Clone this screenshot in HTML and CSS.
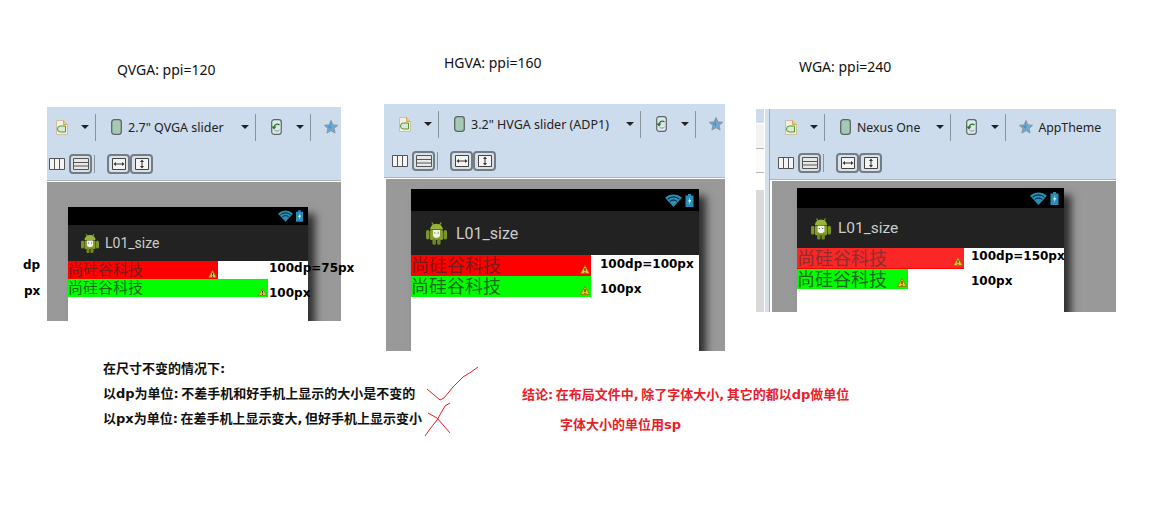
FILE: index.html
```html
<!DOCTYPE html>
<html lang="zh-CN">
  <head>
    <meta charset="UTF-8" />
    <title>dp px</title>
    <link rel="stylesheet" href="styles.css">
  </head>
  <body>
    <svg class="defs" width="0" height="0">
      <symbol id="doc" viewBox="0 0 12 15">
        <path d="M.5.5h7l4 4v10H.5z" fill="#f4efe0" stroke="#cdbf9f"/>
        <path d="M7.5.5v4h4" fill="#f6c66a" stroke="#d9a850"/>
        <path d="M9.500 6H4.500a3 3 0 0 0 0 6h5z" fill="#dbe8d8" stroke="#4c9a2a"/>
      </symbol>
      <symbol id="device" viewBox="0 0 11 16">
        <rect x=".7" y=".7" width="9.6" height="14.6" rx="2.5" fill="#a4c9b4" stroke="#5f6468" stroke-width="1.3"/>
      </symbol>
      <symbol id="rotate" viewBox="0 0 11 16">
        <rect x=".7" y=".7" width="9.6" height="14.6" rx="2.5" fill="#dfe7ee" stroke="#5f6468" stroke-width="1.2"/>
        <path d="M8.500 6A3.400 3.400 0 0 0 3 8" fill="none" stroke="#1b7a23" stroke-width="1.2"/>
        <path d="M.5 7.500h5l-2.500 3z" fill="#1b7a23"/>
        <path d="M3.500 11a3.400 3.400 0 0 0 5 0" fill="none" stroke="#7f9a8a"/>
      </symbol>
      <symbol id="star" viewBox="0 0 14 14">
        <path d="M7 .5l1.900 4.400 4.700.4-3.600 3.100 1.100 4.600L7 10.600 2.900 13l1.100-4.600L.4 5.300l4.700-.4z" fill="#6fa9cf" stroke="#8a949c"/>
        <path d="M7 3L5.800 6 3.500 6.500 7 9z" fill="#2d9ce0"/>
      </symbol>
      <symbol id="cols" viewBox="0 0 16 12">
        <path d="M.5.500h15v11H.5zM5.500.500v11M10.500.500v11" fill="#f4f4f4" stroke="#555"/>
      </symbol>
      <symbol id="rows" viewBox="0 0 16 12">
        <path d="M.5.500h15v11H.5zM.5 4.500h15M.5 8h15" fill="#e8e8e8" stroke="#555"/>
      </symbol>
      <symbol id="hfit" viewBox="0 0 14 12">
        <path d="M.5.500h13v11H.5z" fill="#f4f4f4" stroke="#444"/>
        <path d="M3 6h8" stroke="#333"/>
        <path d="M1.500 6l2.500-2v4zM12.500 6L10 4v4z" fill="#333"/>
      </symbol>
      <symbol id="vfit" viewBox="0 0 14 12">
        <path d="M.5.500h13v11H.5z" fill="#f4f4f4" stroke="#444"/>
        <path d="M7 3v6" stroke="#333"/>
        <path d="M7 1.500L5 4h4zM7 10.500L5 8h4z" fill="#333"/>
      </symbol>
      <symbol id="android" viewBox="0 0 18 20">
        <path d="M5 1l1.500 2.500M13 1l-1.500 2.500" stroke="#8aa62e"/>
        <path d="M3.500 7a5.500 5 0 0 1 11 0z" fill="#96b436"/>
        <rect x="3.500" y="7.500" width="11" height="8.500" rx="1" fill="#86a02c"/>
        <rect x="0" y="7.500" width="3" height="8" rx="1.500" fill="#7b9528"/>
        <rect x="15" y="7.500" width="3" height="8" rx="1.500" fill="#7b9528"/>
        <rect x="5.500" y="15" width="3" height="5" rx="1" fill="#6f8823"/>
        <rect x="9.500" y="15" width="3" height="5" rx="1" fill="#6f8823"/>
        <path d="M6 7.500h6v5l-1.500 1.500h-3L6 12.500z" fill="#f2f2ea"/>
        <path d="M7 9.500h1v1H7zM10 9.500h1v1h-1z" fill="#555"/>
      </symbol>
      <symbol id="wifi" viewBox="0 0 16 12">
        <path d="M0 3.500a11.500 11.500 0 0 1 16 0L8 12z" fill="#2a8db5"/>
        <path d="M2.500 4.800a8 8 0 0 1 11 0M4.500 7a5 5 0 0 1 7 0" fill="none" stroke="#000" stroke-width=".8"/>
      </symbol>
      <symbol id="battery" viewBox="0 0 8 13">
        <path d="M2.500 0h3v1.500H8V13H0V1.500h2.500z" fill="#2a8db5"/>
        <path d="M4.800 3L2.500 7.500h1.500L3.200 11l2.600-5H4.200z" fill="#d8f0fa"/>
      </symbol>
      <symbol id="warn" viewBox="0 0 10 9">
        <path d="M5 .5l4.500 8H.5z" fill="#f3c21d" stroke="#8d6a10" stroke-width=".7"/>
        <path d="M5 3v3M5 6.800v1" stroke="#222"/>
      </symbol>
    </svg>

    <div class="canvas">
      <div class="caption caption-qvga">QVGA: ppi=120</div>
      <div class="caption caption-hvga">HGVA: ppi=160</div>
      <div class="caption caption-wga">WGA: ppi=240</div>

      <section class="shot shot-qvga">
        <div class="toolbar">
          <div class="tool-row">
            <svg class="ic-doc"><use href="#doc"/></svg>
            <span class="caret"></span>
            <span class="sep"></span>
            <svg class="ic-device"><use href="#device"/></svg>
            <span class="tool-text device-name">2.7" QVGA slider</span>
            <span class="caret"></span>
            <span class="sep"></span>
            <svg class="ic-rotate"><use href="#rotate"/></svg>
            <span class="caret"></span>
            <span class="sep"></span>
            <svg class="ic-star"><use href="#star"/></svg>
          </div>
          <div class="tool-row row-two">
            <svg class="ic-cols"><use href="#cols"/></svg>
            <span class="tbtn"><svg><use href="#rows"/></svg></span>
            <span class="sep sep-short"></span>
            <span class="tbtn tbtn-first"><svg><use href="#hfit"/></svg></span>
            <span class="tbtn"><svg><use href="#vfit"/></svg></span>
          </div>
        </div>
        <div class="stage">
          <div class="phone">
            <div class="status"><svg class="ic-wifi"><use href="#wifi"/></svg><svg class="ic-battery"><use href="#battery"/></svg></div>
            <div class="appbar"><svg class="ic-android"><use href="#android"/></svg><span>L01_size</span></div>
            <div class="bar bar-red"><span>尚硅谷科技</span><svg class="ic-warn"><use href="#warn"/></svg></div>
            <div class="bar bar-green"><span>尚硅谷科技</span><svg class="ic-warn"><use href="#warn"/></svg></div>
          </div>
        </div>
      </section>

      <section class="shot shot-hvga">
        <div class="toolbar">
          <div class="tool-row">
            <svg class="ic-doc"><use href="#doc"/></svg>
            <span class="caret"></span>
            <span class="sep"></span>
            <svg class="ic-device"><use href="#device"/></svg>
            <span class="tool-text device-name">3.2" HVGA slider (ADP1)</span>
            <span class="caret"></span>
            <span class="sep"></span>
            <svg class="ic-rotate"><use href="#rotate"/></svg>
            <span class="caret"></span>
            <span class="sep"></span>
            <svg class="ic-star"><use href="#star"/></svg>
          </div>
          <div class="tool-row row-two">
            <svg class="ic-cols"><use href="#cols"/></svg>
            <span class="tbtn"><svg><use href="#rows"/></svg></span>
            <span class="sep sep-short"></span>
            <span class="tbtn tbtn-first"><svg><use href="#hfit"/></svg></span>
            <span class="tbtn"><svg><use href="#vfit"/></svg></span>
          </div>
        </div>
        <div class="stage">
          <div class="phone">
            <div class="status"><svg class="ic-wifi"><use href="#wifi"/></svg><svg class="ic-battery"><use href="#battery"/></svg></div>
            <div class="appbar"><svg class="ic-android"><use href="#android"/></svg><span>L01_size</span></div>
            <div class="bar bar-red"><span>尚硅谷科技</span><svg class="ic-warn"><use href="#warn"/></svg></div>
            <div class="bar bar-green"><span>尚硅谷科技</span><svg class="ic-warn"><use href="#warn"/></svg></div>
          </div>
        </div>
      </section>

      <section class="shot shot-wga">
        <div class="side">
          <div class="side-pane">
            <div class="side-top"></div>
            <div class="side-gap"></div>
            <div class="side-box"></div>
            <div class="side-gap side-gap-low"></div>
            <div class="side-scroll"></div>
          </div>
        </div>
        <div class="shot-main">
          <div class="toolbar">
            <div class="tool-row">
              <svg class="ic-doc"><use href="#doc"/></svg>
              <span class="caret"></span>
              <span class="sep"></span>
              <svg class="ic-device"><use href="#device"/></svg>
              <span class="tool-text device-name">Nexus One</span>
              <span class="caret"></span>
              <span class="sep"></span>
              <svg class="ic-rotate"><use href="#rotate"/></svg>
              <span class="caret"></span>
              <span class="sep"></span>
              <svg class="ic-star"><use href="#star"/></svg>
              <span class="tool-text theme-name">AppTheme</span>
            </div>
            <div class="tool-row row-two">
              <svg class="ic-cols"><use href="#cols"/></svg>
              <span class="tbtn"><svg><use href="#rows"/></svg></span>
              <span class="sep sep-short"></span>
              <span class="tbtn tbtn-first"><svg><use href="#hfit"/></svg></span>
              <span class="tbtn"><svg><use href="#vfit"/></svg></span>
            </div>
          </div>
          <div class="stage">
            <div class="phone">
              <div class="status"><svg class="ic-wifi"><use href="#wifi"/></svg><svg class="ic-battery"><use href="#battery"/></svg></div>
              <div class="appbar"><svg class="ic-android"><use href="#android"/></svg><span>L01_size</span></div>
              <div class="bar bar-red"><span>尚硅谷科技</span><svg class="ic-warn"><use href="#warn"/></svg></div>
              <div class="bar bar-green"><span>尚硅谷科技</span><svg class="ic-warn"><use href="#warn"/></svg></div>
            </div>
          </div>
        </div>
      </section>

      <div class="tag tag-dp">dp</div>
      <div class="tag tag-px">px</div>
      <div class="tag tag-a1">100dp=75px</div>
      <div class="tag tag-a2">100px</div>
      <div class="tag tag-b1">100dp=100px</div>
      <div class="tag tag-b2">100px</div>
      <div class="tag tag-c1">100dp=150px</div>
      <div class="tag tag-c2">100px</div>

      <div class="notes">
        <p>在尺寸不变的情况下:</p>
        <p>以dp为单位: 不差手机和好手机上显示的大小是不变的</p>
        <p>以px为单位: 在差手机上显示变大, 但好手机上显示变小</p>
      </div>

      <div class="result">
        <p>结论: 在布局文件中, 除了字体大小, 其它的都以dp做单位</p>
        <p class="result-two">字体大小的单位用sp</p>
      </div>

      <svg class="ink" width="70" height="80" viewBox="420 362 70 80">
        <path d="M427 389l6 5 7 6 4-2 9-11 10-10 8-5 7-5"/>
        <path d="M428 413l9 5 7 8 6 7"/>
        <path d="M450 403l-5 3-8 14-7 9-5 7"/>
      </svg>
    </div>
  </body>
</html>
```

FILE: styles.css
```css
body {
  margin: 0;
  background: #fff;
  font-family: "Noto Sans", "Noto Sans CJK SC", sans-serif;
}
p {
  margin: 0;
}
.defs {
  position: absolute;
}
.canvas {
  position: relative;
  width: 1150px;
  height: 520px;
  overflow: hidden;
}

/* captions and annotations sit on the free canvas */
.caption {
  position: absolute;
  font-size: 14px;
  line-height: 18px;
  color: #111;
  white-space: nowrap;
}
.caption-qvga {
  left: 117px;
  top: 61px;
}
.caption-hvga {
  left: 444px;
  top: 54px;
}
.caption-wga {
  left: 799px;
  top: 58px;
}
.tag {
  position: absolute;
  font-family: "DejaVu Sans", sans-serif;
  font-size: 12px;
  font-weight: bold;
  line-height: 16px;
  color: #000;
  white-space: nowrap;
}
.tag-dp {
  left: 23px;
  top: 257px;
}
.tag-px {
  left: 24px;
  top: 283px;
}
.tag-a1 {
  left: 269px;
  top: 260px;
}
.tag-a2 {
  left: 269px;
  top: 285px;
}
.tag-b1 {
  left: 600px;
  top: 256px;
}
.tag-b2 {
  left: 600px;
  top: 281px;
}
.tag-c1 {
  left: 971px;
  top: 248px;
}
.tag-c2 {
  left: 971px;
  top: 273px;
}

/* pasted screenshots */
.shot {
  position: absolute;
  display: flex;
  flex-direction: column;
  overflow: hidden;
  background: #999;
}
.shot-qvga {
  left: 47px;
  top: 107px;
  width: 294px;
  height: 214px;
}
.shot-hvga {
  left: 384px;
  top: 104px;
  width: 341px;
  height: 247px;
}
.shot-wga {
  left: 756px;
  top: 109px;
  width: 360px;
  height: 203px;
  flex-direction: row;
}
.shot-main {
  flex: 1;
  display: flex;
  flex-direction: column;
  min-width: 0;
}
.side {
  width: 13px;
  background: #d5e0ec;
  border-right: 1px solid #a3abb3;
}
.side-pane {
  width: 8px;
  height: 100%;
  display: flex;
  flex-direction: column;
  background: #ececec;
  border-right: 1px solid #fff;
}
.side-top {
  height: 14px;
  background: #cddcec;
  border-bottom: 1px solid #fff;
}
.side-gap {
  height: 24px;
  background: #f3f3f3;
}
.side-gap-low {
  height: 17px;
  background: #fff;
}
.side-box {
  height: 23px;
  background: #fafafa;
  border-top: 1px solid #b5b5b5;
  border-bottom: 1px solid #b5b5b5;
}
.side-scroll {
  flex: 1;
  background: #d9d9d9;
}

.toolbar {
  background: #cddcec;
  border-bottom: 1px solid #aeb4ba;
  box-sizing: border-box;
  flex: none;
  height: 74px;
}
.shot-wga .toolbar {
  height: 71px;
}
.tool-row {
  display: flex;
  align-items: center;
  height: 46px;
  padding: 0 0 6px 9px;
  box-sizing: border-box;
}
.shot-hvga .tool-row,
.shot-wga .tool-row {
  padding-left: 15px;
}
.shot-wga .tool-row {
  height: 43px;
  padding-bottom: 7px;
}
.tool-row.row-two {
  height: 22px;
  padding-left: 2px;
  padding-bottom: 0;
}
.shot-hvga .tool-row.row-two,
.shot-wga .tool-row.row-two {
  padding-left: 8px;
}
.tool-text {
  font-size: 12.500px;
  color: #222;
  white-space: nowrap;
}
.device-name {
  margin: 0 17px 0 6px;
}
.shot-wga .tool-text {
  font-size: 12.300px;
}
.shot-wga .device-name {
  margin-right: 16px;
}
.theme-name {
  margin-left: 5px;
}
.caret {
  width: 0;
  height: 0;
  border-left: 4px solid transparent;
  border-right: 4px solid transparent;
  border-top: 4px solid #222;
  margin-right: 6px;
}
.ic-doc + .caret {
  margin-left: 13px;
}
.ic-rotate + .caret {
  margin-left: 14px;
}
.sep {
  width: 1px;
  height: 27px;
  background: #8b949c;
  margin-right: 15px;
}
.sep-short {
  height: 18px;
  margin: 0 12px 0 2px;
}
.ic-doc {
  width: 12px;
  height: 15px;
}
.ic-device,
.ic-rotate {
  width: 11px;
  height: 16px;
}
.ic-star {
  width: 14px;
  height: 14px;
  margin-left: -2px;
}
.ic-cols {
  width: 16px;
  height: 12px;
  margin-right: 4px;
}
.tbtn {
  width: 23px;
  height: 20px;
  box-sizing: border-box;
  border: 2px solid #737d87;
  border-radius: 4px;
  background: #d8e0e8;
  display: flex;
  align-items: center;
  justify-content: center;
}
.tbtn svg {
  width: 16px;
  height: 12px;
}
.tbtn-first svg,
.tbtn-first + .tbtn svg {
  width: 14px;
}

.stage {
  flex: 1;
  min-height: 0;
  border-top: 1px solid #fff;
  background: #999;
  display: flex;
  flex-direction: column;
}
.shot-qvga .stage {
  padding: 25px 0 0 21px;
}
.shot-hvga .stage {
  padding: 10px 0 0 25px;
  border-left: 2px solid #fff;
}
.shot-wga .stage {
  padding: 7px 0 0 25px;
  border-left: 2px solid #fff;
}

.phone {
  flex: 1;
  background: #fff;
  box-shadow: 7px 7px 8px rgba(0, 0, 0, 0.7);
}
.shot-qvga .phone {
  width: 240px;
}
.shot-hvga .phone {
  width: 288px;
}
.shot-wga .phone {
  width: 267px;
}
.status {
  background: #000;
  height: 18px;
  display: flex;
  align-items: center;
  justify-content: flex-end;
  gap: 3px;
  padding-right: 5px;
}
.ic-wifi {
  width: 15px;
  height: 12px;
}
.ic-battery {
  width: 7px;
  height: 12px;
}
.shot-hvga .status {
  height: 22px;
}
.shot-wga .status {
  height: 20px;
}
.shot-hvga .ic-wifi,
.shot-wga .ic-wifi {
  width: 17px;
  height: 13px;
}
.shot-hvga .ic-battery,
.shot-wga .ic-battery {
  width: 9px;
  height: 13px;
}
.appbar {
  background: #222;
  height: 36px;
  display: flex;
  align-items: center;
  gap: 6px;
  padding-left: 13px;
  font-family: Roboto, sans-serif;
  font-size: 14px;
  color: #ccc;
}
.ic-android {
  width: 18px;
  height: 20px;
}
.shot-hvga .appbar {
  height: 44px;
  padding-left: 15px;
  gap: 9px;
  font-size: 16px;
}
.shot-wga .appbar {
  height: 40px;
  padding-left: 14px;
  gap: 7px;
  font-size: 15.500px;
}
.shot-hvga .ic-android {
  width: 21px;
  height: 24px;
}
.shot-wga .ic-android {
  width: 20px;
  height: 23px;
}

/* the two views being compared */
.bar {
  display: flex;
  align-items: flex-start;
  justify-content: space-between;
  height: 18px;
  font-family: "Liberation Sans", "Noto Sans CJK SC", sans-serif;
  font-size: 15px;
  line-height: 18px;
  box-sizing: border-box;
}
.bar-red {
  background: #f00;
  color: #7d1a1a;
}
.bar-green {
  background: #0f0;
  color: #1c6a1c;
}
.ic-warn {
  width: 9px;
  height: 8px;
  flex: none;
  align-self: flex-end;
  margin: 0 1px 1px 0;
}
.shot-qvga .bar-red {
  width: 150px;
}
.shot-qvga .bar-green {
  width: 200px;
}
.shot-hvga .bar,
.shot-wga .bar {
  font-size: 18px;
  height: 21px;
}
.shot-hvga .bar {
  width: 180px;
  line-height: 23px;
}
.shot-wga .bar {
  line-height: 22px;
}
.shot-wga .bar-red {
  width: 167px;
  background: #fb2626;
  color: #8a3030;
  border-bottom: 1px solid #f00;
}
.shot-wga .bar-green {
  width: 111px;
  height: 20px;
}
.shot-hvga .ic-warn,
.shot-wga .ic-warn {
  width: 10px;
  height: 9px;
  margin: 0 1px 2px 0;
}

/* notes under the shots */
.notes {
  position: absolute;
  left: 103px;
  top: 356px;
  font-family: "DejaVu Sans", "Noto Sans CJK SC", sans-serif;
  font-size: 13px;
  font-weight: bold;
  line-height: 25px;
  word-spacing: -2px;
  color: #111;
  white-space: nowrap;
}
.result {
  position: absolute;
  left: 522px;
  top: 380px;
  font-family: "DejaVu Sans", "Noto Sans CJK SC", sans-serif;
  font-size: 13px;
  font-weight: bold;
  line-height: 30px;
  word-spacing: -2px;
  color: #e8202a;
  white-space: nowrap;
}
.result-two {
  padding-left: 38px;
}
.ink {
  position: absolute;
  left: 420px;
  top: 362px;
}
.ink path {
  fill: none;
  stroke: #ed1c24;
  stroke-width: 1;
}
```
